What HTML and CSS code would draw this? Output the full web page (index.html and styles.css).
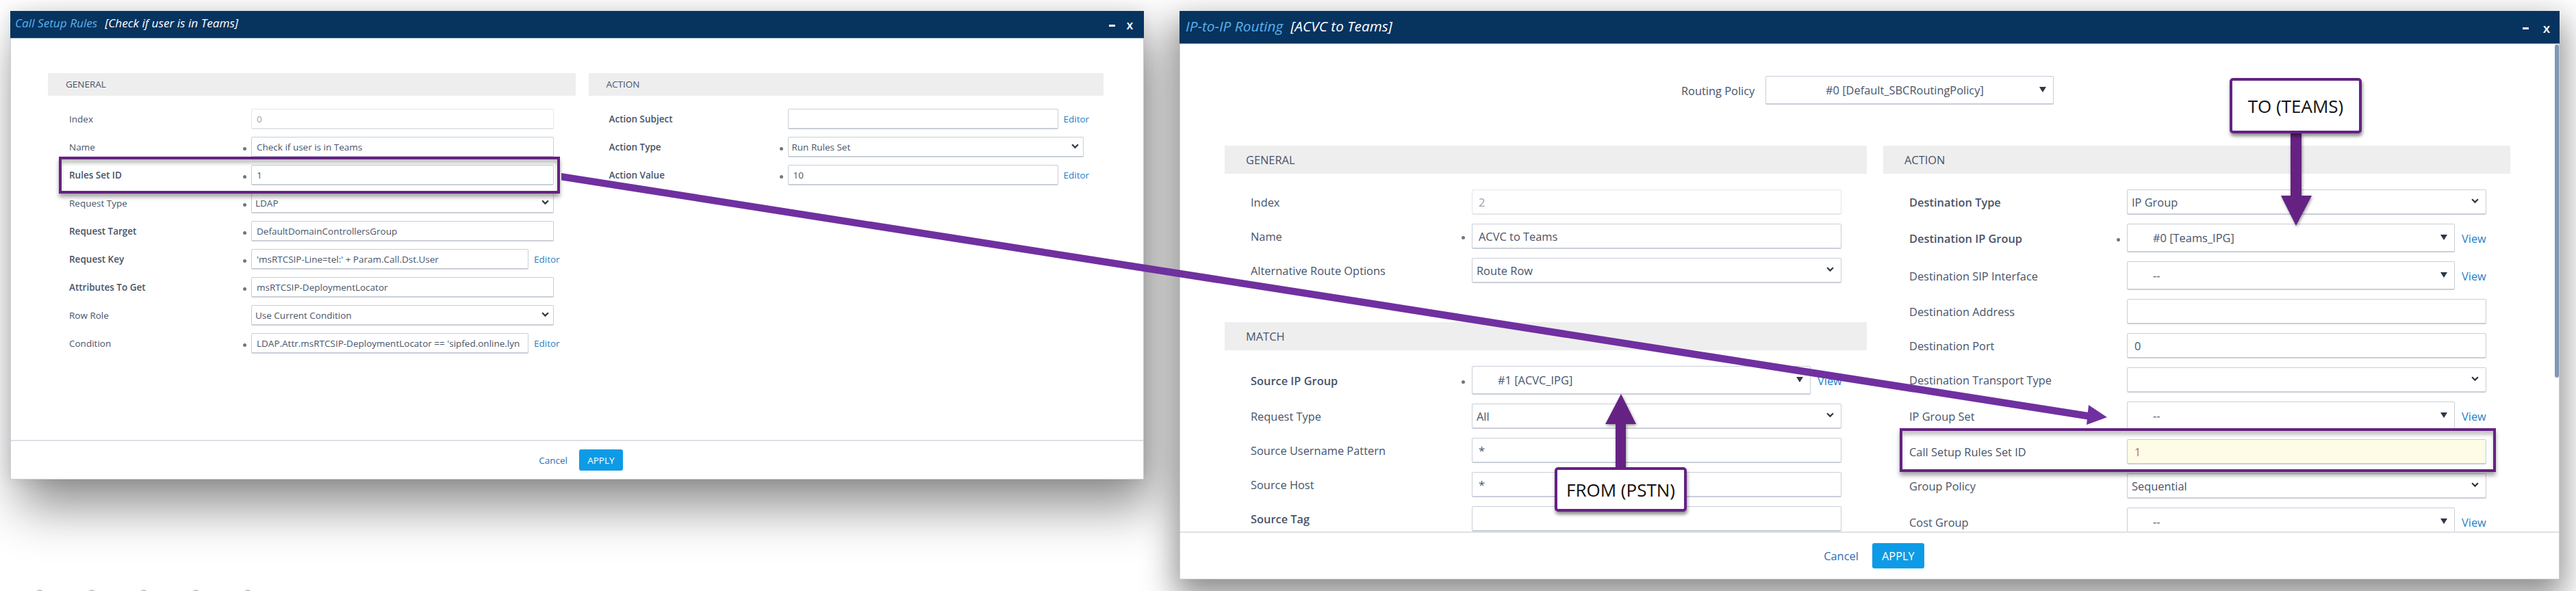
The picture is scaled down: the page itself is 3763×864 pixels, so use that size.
FILE: index.html
```html
<!DOCTYPE html>
<html lang="en">
<head>
    <meta charset="UTF-8">
    <title>Call Setup Rules and IP-to-IP Routing</title>
    <link rel="stylesheet" href="styles.css">
</head>
<body>
    <div class="desktop">
        <!-- Call Setup Rules -->
        <section class="dialog small">
            <header class="title-bar">
                <h1><em>Call Setup Rules</em><span>[Check if user is in Teams]</span></h1>
                <div class="win-controls"><span class="min"></span><span class="close">X</span></div>
            </header>
            <div class="dialog-body">
                <div class="columns">
                    <div class="col">
                        <h2 class="section-bar">GENERAL</h2>
                        <div class="rows">
                            <div class="row"><label>Index</label><i></i><div class="field disabled">0</div></div>
                            <div class="row"><label>Name</label><i class="dot"></i><div class="field">Check if user is in Teams</div></div>
                            <div class="row"><label class="strong">Rules Set ID</label><i class="dot"></i><div class="field">1</div></div>
                            <div class="row"><label>Request Type</label><i class="dot"></i><div class="field select">LDAP<svg class="chev" viewBox="0 0 10 7"><path d="M1 1l4 4 4-4"/></svg></div></div>
                            <div class="row"><label class="strong">Request Target</label><i class="dot"></i><div class="field">DefaultDomainControllersGroup</div></div>
                            <div class="row"><label class="strong">Request Key</label><i class="dot"></i><div class="field short">'msRTCSIP-Line=tel:' + Param.Call.Dst.User</div><a>Editor</a></div>
                            <div class="row"><label class="strong">Attributes To Get</label><i class="dot"></i><div class="field">msRTCSIP-DeploymentLocator</div></div>
                            <div class="row"><label>Row Role</label><i></i><div class="field select">Use Current Condition<svg class="chev" viewBox="0 0 10 7"><path d="M1 1l4 4 4-4"/></svg></div></div>
                            <div class="row"><label>Condition</label><i class="dot"></i><div class="field short">LDAP.Attr.msRTCSIP-DeploymentLocator == 'sipfed.online.lyn</div><a>Editor</a></div>
                        </div>
                    </div>
                    <div class="col">
                        <h2 class="section-bar">ACTION</h2>
                        <div class="rows">
                            <div class="row"><label class="strong">Action Subject</label><i></i><div class="field short"></div><a>Editor</a></div>
                            <div class="row"><label class="strong">Action Type</label><i class="dot"></i><div class="field select">Run Rules Set<svg class="chev" viewBox="0 0 10 7"><path d="M1 1l4 4 4-4"/></svg></div></div>
                            <div class="row"><label class="strong">Action Value</label><i class="dot"></i><div class="field short">10</div><a>Editor</a></div>
                        </div>
                    </div>
                </div>
            </div>
            <footer class="dialog-footer"><a>Cancel</a><button>APPLY</button></footer>
        </section>

        <!-- IP-to-IP Routing -->
        <section class="dialog large">
            <header class="title-bar">
                <h1><em>IP-to-IP Routing</em><span>[ACVC to Teams]</span></h1>
                <div class="win-controls"><span class="min"></span><span class="close">X</span></div>
            </header>
            <div class="dialog-body">
                <div class="policy">
                    <label>Routing Policy</label>
                    <div class="field combo">#0 [Default_SBCRoutingPolicy]<svg class="tri" viewBox="0 0 10 8"><path d="M0 0h10L5 8z"/></svg></div>
                </div>
                <div class="columns">
                    <div class="col">
                        <h2 class="section-bar">GENERAL</h2>
                        <div class="rows">
                            <div class="row"><label>Index</label><i></i><div class="field disabled">2</div></div>
                            <div class="row"><label>Name</label><i class="dot"></i><div class="field">ACVC to Teams</div></div>
                            <div class="row"><label>Alternative Route Options</label><i></i><div class="field select">Route Row<svg class="chev" viewBox="0 0 10 7"><path d="M1 1l4 4 4-4"/></svg></div></div>
                        </div>
                        <h2 class="section-bar match">MATCH</h2>
                        <div class="rows">
                            <div class="row tall"><label class="strong">Source IP Group</label><i class="dot"></i><div class="field combo short">#1 [ACVC_IPG]<svg class="tri" viewBox="0 0 10 8"><path d="M0 0h10L5 8z"/></svg></div><a>View</a></div>
                            <div class="row"><label>Request Type</label><i></i><div class="field select">All<svg class="chev" viewBox="0 0 10 7"><path d="M1 1l4 4 4-4"/></svg></div></div>
                            <div class="row"><label>Source Username Pattern</label><i></i><div class="field">*</div></div>
                            <div class="row"><label>Source Host</label><i></i><div class="field">*</div></div>
                            <div class="row"><label class="strong">Source Tag</label><i></i><div class="field"></div></div>
                        </div>
                    </div>
                    <div class="col">
                        <h2 class="section-bar">ACTION</h2>
                        <div class="rows">
                            <div class="row"><label class="strong">Destination Type</label><i></i><div class="field select">IP Group<svg class="chev" viewBox="0 0 10 7"><path d="M1 1l4 4 4-4"/></svg></div></div>
                            <div class="row tall"><label class="strong">Destination IP Group</label><i class="dot"></i><div class="field combo short">#0 [Teams_IPG]<svg class="tri" viewBox="0 0 10 8"><path d="M0 0h10L5 8z"/></svg></div><a>View</a></div>
                            <div class="row tall"><label>Destination SIP Interface</label><i></i><div class="field combo short">--<svg class="tri" viewBox="0 0 10 8"><path d="M0 0h10L5 8z"/></svg></div><a>View</a></div>
                            <div class="row"><label>Destination Address</label><i></i><div class="field"></div></div>
                            <div class="row"><label>Destination Port</label><i></i><div class="field">0</div></div>
                            <div class="row"><label>Destination Transport Type</label><i></i><div class="field select"><svg class="chev" viewBox="0 0 10 7"><path d="M1 1l4 4 4-4"/></svg></div></div>
                            <div class="row tall"><label>IP Group Set</label><i></i><div class="field combo short">--<svg class="tri" viewBox="0 0 10 8"><path d="M0 0h10L5 8z"/></svg></div><a>View</a></div>
                            <div class="row"><label>Call Setup Rules Set ID</label><i></i><div class="field changed">1</div></div>
                            <div class="row"><label>Group Policy</label><i></i><div class="field select">Sequential<svg class="chev" viewBox="0 0 10 7"><path d="M1 1l4 4 4-4"/></svg></div></div>
                            <div class="row tall"><label>Cost Group</label><i></i><div class="field combo short">--<svg class="tri" viewBox="0 0 10 8"><path d="M0 0h10L5 8z"/></svg></div><a>View</a></div>
                        </div>
                    </div>
                </div>
                <div class="scrollbar"></div>
            </div>
            <footer class="dialog-footer"><a>Cancel</a><button>APPLY</button></footer>
        </section>
    </div>

    <!-- Anotaciones encima de las ventanas -->
    <div class="frame frame-rules"></div>
    <div class="frame frame-setup"></div>
    <svg class="arrows" width="3763" height="864" viewBox="0 0 3763 864">
        <g fill="#7030a0">
            <path d="M820 253L3052 603 3050 613.500 820 263.500z"/>
            <path d="M3078 610L3051 592 3048 621z"/>
        </g>
        <g fill="#652283" class="arrow-shadow">
            <path d="M2360 683V620H2345L2368 576 2390 620H2375V683z"/>
            <path d="M3346 195V286H3332L3354 330 3377 286H3362V195z"/>
        </g>
    </svg>
    <div class="callout callout-from">FROM (PSTN)</div>
    <div class="callout callout-to">TO (TEAMS)</div>
    <div class="page-dots"><span></span><span></span><span></span><span></span><span></span></div>
</body>
</html>
```

FILE: styles.css
```css
/* General */
html, body {
    margin: 0;
    padding: 0;
    height: 864px;
    overflow: hidden;
    background: #fff;
}

body {
    position: relative;
    font-family: "Open Sans", sans-serif;
    color: #47546a;
}

.desktop {
    display: flex;
    align-items: flex-start;
    gap: 52px;
    padding: 16px 0 0 15px;
}

/* Dialogs */
.dialog {
    display: flex;
    flex-direction: column;
    flex: none;
    box-sizing: border-box;
    background: #fff;
    border: 1px solid #c9ced6;
    border-top: none;
}

.dialog.small {
    width: 1656px;
    height: 685px;
    font-size: 13.500px;
    box-shadow: 14px 38px 70px rgba(0, 0, 0, 0.46), 0 0 20px rgba(0, 0, 0, 0.1);
}

.dialog.large {
    width: 2016px;
    height: 831px;
    font-size: 16.400px;
    box-shadow: 0 20px 45px 6px rgba(0, 0, 0, 0.45);
}

.title-bar {
    display: flex;
    flex: none;
    align-items: center;
    justify-content: space-between;
    box-sizing: border-box;
    margin: 0 -1px;
    background: #07335f;
    border-bottom: 1px solid #4a6a8c;
}

.small .title-bar {
    height: 40px;
    padding: 0 16px 0 7px;
}

.large .title-bar {
    height: 48px;
    padding: 0 14px 0 9px;
}

.title-bar h1 {
    margin: 0;
    padding-bottom: 4px;
    font-weight: 400;
    font-style: italic;
    font-size: 17.200px;
    color: #fff;
    white-space: nowrap;
}

.large .title-bar h1 {
    font-size: 20.800px;
}

.title-bar em {
    margin-right: 11px;
    color: #5cb0ea;
}

.win-controls {
    display: flex;
    align-items: center;
    gap: 17px;
    padding-top: 4px;
    color: #fff;
    font-weight: 700;
    font-size: 14px;
}

.large .win-controls {
    gap: 21px;
    font-size: 15px;
}

.min {
    width: 9px;
    height: 3px;
    background: #fff;
}

.dialog-body {
    position: relative;
    flex: 1;
    overflow: hidden;
}

.small .dialog-body {
    padding: 51px 58px 0 54px;
}

.large .dialog-body {
    padding: 47px 71px 0 65px;
}

.columns {
    display: flex;
}

.small .columns {
    gap: 19px;
}

.large .columns {
    gap: 24px;
}

.small .col:first-child {
    width: 771px;
}

.small .col:last-child {
    width: 753px;
}

.large .col:first-child {
    width: 938px;
}

.large .col:last-child {
    width: 916px;
}

.section-bar {
    margin: 0;
    font-weight: 400;
    font-size: inherit;
    background: #eeeeee;
}

.small .section-bar {
    height: 33px;
    padding-left: 26px;
    line-height: 33px;
}

.large .section-bar {
    height: 41px;
    padding-left: 31px;
    line-height: 41px;
}

/* Form rows */
.rows {
    display: flex;
    flex-direction: column;
}

.small .rows {
    gap: 11px;
    padding-top: 19px;
}

.large .rows {
    gap: 13px;
    padding-top: 23px;
}

.large .section-bar.match {
    margin-top: 57px;
}

.row {
    display: flex;
    align-items: center;
    flex: none;
}

.small .row {
    height: 30px;
}

.large .row {
    height: 37px;
}

.large .row.tall {
    height: 42px;
}

.row label {
    flex: none;
}

.small .col:first-child .row {
    padding-left: 31px;
}

.small .col:first-child .row label {
    width: 250px;
}

.small .col:last-child .row {
    padding-left: 30px;
}

.small .col:last-child .row label {
    width: 245px;
}

.large .col:first-child .row {
    padding-left: 38px;
}

.large .col:first-child .row label {
    width: 306px;
}

.large .col:last-child .row {
    padding-left: 38px;
}

.large .col:last-child .row label {
    width: 301px;
}

.row label.strong {
    font-weight: 600;
}

.row i {
    flex: none;
    box-sizing: border-box;
    width: 16px;
    height: 5px;
}

.row i.dot::before {
    content: "";
    display: block;
    width: 5px;
    height: 5px;
    margin: 2px 0 0 4px;
    border-radius: 50%;
    background: #6d7785;
}

.large .row i {
    width: 17px;
}

.large .row i.dot::before {
    margin-left: 2px;
}

.field {
    position: relative;
    display: flex;
    align-items: center;
    box-sizing: border-box;
    height: 100%;
    color: #47546a;
    background: #fff;
    border: 1px solid #c9ced8;
    border-bottom-width: 2px;
    border-radius: 2px;
    white-space: nowrap;
    overflow: hidden;
}

.small .field {
    width: 442px;
    padding-left: 7px;
}

.large .col:first-child .field {
    width: 540px;
    padding-left: 9px;
}

.large .col:last-child .field {
    width: 525px;
    padding-left: 10px;
}

.small .col:last-child .field {
    width: 432px;
}

.small .col:first-child .field.short {
    width: 405px;
}

.small .col:last-child .field.short {
    width: 395px;
}

.large .col:first-child .field.short {
    width: 495px;
}

.large .col:last-child .field.short {
    width: 479px;
}

.small .field.select {
    padding-left: 5px;
}

.large .col .field.select {
    padding-left: 6px;
}

.field.disabled {
    color: #9aa1ad;
    border-color: #e3e6eb;
}

.field.changed {
    color: #b9704a;
    background: #fefbe6;
}

.large .col .field.combo {
    padding-left: 37px;
}

.policy .field.combo {
    width: 421px;
    height: 42px;
    padding-left: 87px;
}

.chev {
    position: absolute;
    top: 50%;
    width: 11px;
    height: 8px;
    margin-top: -5px;
    fill: none;
    stroke: #2d3744;
    stroke-width: 2;
}

.small .chev {
    right: 6px;
}

.large .chev {
    right: 10px;
}

.tri {
    position: absolute;
    top: 50%;
    right: 10px;
    width: 10px;
    height: 8px;
    margin-top: -5px;
    fill: #2d3744;
}

.row a {
    color: #1f7fc9;
}

.small .row a {
    margin-left: 8px;
}

.large .row a {
    margin-left: 10px;
}

.policy {
    display: flex;
    align-items: center;
    justify-content: flex-start;
    height: 42px;
    margin-bottom: 60px;
    padding-left: 667px;
}

.policy label {
    width: 123px;
    white-space: nowrap;
}

/* Footer */
.dialog-footer {
    display: flex;
    flex: none;
    align-items: center;
    justify-content: center;
    border-top: 2px solid #dde1e6;
}

.small .dialog-footer {
    height: 55px;
    padding-left: 11px;
    gap: 17px;
}

.large .dialog-footer {
    height: 67px;
    padding-left: 13px;
    gap: 20px;
}

.dialog-footer a {
    color: #2a6fb5;
}

.dialog-footer button {
    color: #fff;
    font: inherit;
    background: #0e9be6;
    border: none;
    border-radius: 3px;
}

.small .dialog-footer button {
    width: 64px;
    height: 31px;
}

.large .dialog-footer button {
    width: 76px;
    height: 37px;
}

.scrollbar {
    position: absolute;
    top: 1px;
    right: 0;
    width: 6px;
    height: 487px;
    border-radius: 3px;
    background: #8098b3;
}

/* Annotations */
.frame {
    position: absolute;
    box-sizing: border-box;
    border: 4px solid #652283;
    box-shadow: 0 5px 6px rgba(0, 0, 0, 0.35), inset 0 6px 5px rgba(0, 0, 0, 0.22);
}

.frame-rules {
    left: 86px;
    top: 229px;
    width: 732px;
    height: 54px;
}

.frame-setup {
    left: 2775px;
    top: 626px;
    width: 871px;
    height: 64px;
}

.arrows {
    position: absolute;
    left: 0;
    top: 0;
}

.arrow-shadow {
    filter: drop-shadow(1px 2px 2px rgba(0, 0, 0, 0.4));
}

.callout {
    position: absolute;
    display: flex;
    align-items: center;
    justify-content: center;
    box-sizing: border-box;
    width: 193px;
    color: #111;
    font-size: 26px;
    background: #fff;
    border: 4px solid #652283;
    border-radius: 5px;
    box-shadow: 1px 4px 5px rgba(0, 0, 0, 0.45);
}

.callout-from {
    left: 2271px;
    top: 683px;
    height: 65px;
}

.callout-to {
    left: 3257px;
    top: 114px;
    height: 81px;
}

.page-dots {
    position: absolute;
    left: 51px;
    top: 862px;
    display: flex;
    gap: 62px;
}

.page-dots span {
    width: 14px;
    height: 14px;
    border-radius: 50%;
    background: #c8c8c8;
}
```
